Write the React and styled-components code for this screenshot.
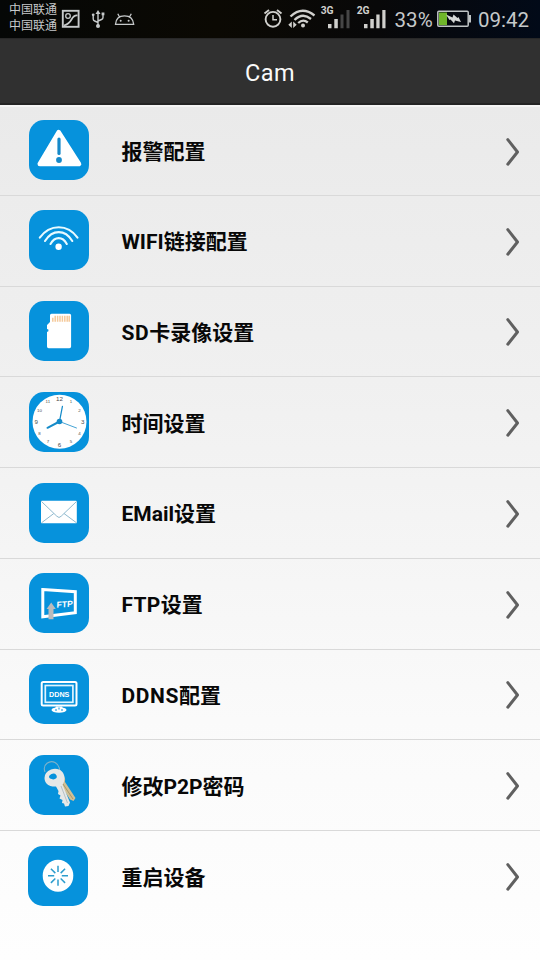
import React from "react";
import styled, { createGlobalStyle } from "styled-components";

const GlobalStyle = createGlobalStyle`
  * { box-sizing: border-box; }
  body { margin: 0; font-family: Roboto, "Noto Sans CJK SC", sans-serif; }
  svg { display: block; flex: none; }
`;

const Screen = styled.div`
  display: flex;
  flex-direction: column;
  width: 540px;
  height: 960px;
  overflow: hidden;
  background: linear-gradient(#eaeaea 105px, #f0f0f0 380px, #fafafa 720px, #fefefe 960px);
`;

const StatusBar = styled.header`
  display: flex;
  justify-content: space-between;
  height: 38px;
  flex: none;
  padding: 0 9px;
  color: #c6c9ca;
  background: linear-gradient(90deg, #050706 0%, #0b0903 40%, #080809 70%, #020a18 100%);
`;

const StatusGroup = styled.div`
  display: flex;
  align-items: center;
`;

const Carriers = styled.div`
  font-size: 12px;
  line-height: 16.5px;
  height: 33px;
  margin: 0 4px 2px 0;
  white-space: nowrap;
`;

const StatusText = styled.span`
  font-size: 20.5px;
  line-height: 38px;
  width: ${(p) => p.$width}px;
  margin-top: 2px;
  white-space: nowrap;
`;

const TitleBar = styled.div`
  display: flex;
  align-items: center;
  justify-content: center;
  height: 67px;
  flex: none;
  padding-top: 3px;
  color: #fafafa;
  font-size: 23.5px;
  letter-spacing: 0.4px;
  background: #303030;
  border-top: 1px solid #282828;
  border-bottom: 2px solid #242424;
`;

const List = styled.ul`
  list-style: none;
  margin: 0;
  padding: 0;
  border-top: 2px solid #f5f5f5;
`;

const Row = styled.li`
  display: flex;
  align-items: center;
  height: ${(p) => (p.$first ? 88.8 : 90.75)}px;
  padding: 0 20px 0 ${(p) => p.$inset || 28.8}px;
  border-bottom: ${(p) => (p.$last ? "0" : "1px solid #d9d9d9")};
`;

const Tile = styled.div`
  width: 60px;
  height: 60px;
  flex: none;
  margin-top: ${(p) => (p.$first ? -2.5 : -0.5)}px;
  border-radius: 15px;
  background: #0692dc;
  overflow: hidden;
`;

const Label = styled.span`
  flex: 1;
  margin-left: ${(p) => p.$gap || 32.7}px;
  color: #080808;
  font-size: 21px;
  font-weight: 700;
  line-height: 30px;
  padding-top: ${(p) => (p.$first ? 2 : 3)}px;
`;

const Latin = styled.span`
  letter-spacing: ${(p) => p.$tracking}px;
`;

const Art = ({ children }) => (
  <svg width="60" height="60" viewBox="0 0 60 60" fill="none">{children}</svg>
);

const AlarmArt = () => (
  <Art>
    <path d="M29.7 12.2 L50 44 H10.8 Z" fill="#fff" stroke="#fff" strokeWidth="4.6" strokeLinejoin="round" />
    <path d="M30 19v14.5" stroke="#1689c9" strokeWidth="3.2" strokeLinecap="round" />
    <circle cx="30" cy="40" r="2.9" fill="#1689c9" />
  </Art>
);

const WifiArt = () => (
  <Art>
    <g stroke="#e8faff" strokeWidth="2.1" strokeLinecap="round">
      <path d="M10.8 27.6C21 13.8 38.5 13.8 48.5 27.6" />
      <path d="M16 31C23.5 19.2 36 19.2 43.3 31" />
      <path d="M21.5 34C26 26.2 33.5 26.2 37.8 34" />
    </g>
    <circle cx="29.6" cy="36.8" r="3.2" fill="#fff" />
  </Art>
);

const SdArt = () => (
  <Art>
    <path d="M22.5 12.7h18q1.6 0 1.6 1.6V45.6q0 1.7-1.7 1.7H19.7q-1.7 0-1.7-1.7V31l1.4-.8v-1.600L18 28v-4l3-3v-6.800q0-1.500 1.500-1.500Z" fill="#fff" />
    <path d="M23.800 20.800v-4M26.200 20.800v-6M28.600 20.800v-6M31 20.800v-6M33.400 20.800v-6M35.800 20.800v-6M38.200 20.800v-6M40.200 20.800v-6" stroke="#f4c99a" strokeWidth="1.500" />
  </Art>
);

const CLOCK_MARKS = [12, 1, 2, 3, 4, 5, 6, 7, 8, 9, 10, 11];

const ClockArt = () => (
  <Art>
    <circle cx="30.500" cy="29.700" r="27" fill="#fff" />
    <g fill="#4c4c4c" fontFamily="Liberation Sans" textAnchor="middle">
      {CLOCK_MARKS.map((n, i) => {
        const a = (i * Math.PI) / 6;
        const major = n % 3 === 0;
        return (
          <text key={n} x={30.5 + Math.sin(a) * 23.2} y={29.7 - Math.cos(a) * 23.2 + (major ? 2.1 : 1.6)} fontSize={major ? 6.2 : 4.4}>
            {n}
          </text>
        );
      })}
    </g>
    <g stroke="#158bc9" strokeLinecap="round">
      <path d="M30.500 29.500 18.500 35.800" strokeWidth="2" />
      <path d="M30.500 29.500 33.400 14.500" strokeWidth="1.300" />
      <path d="M30.500 29.500 47.500 36" strokeWidth=".8" />
    </g>
    <circle cx="30.500" cy="29.500" r="2.800" fill="#158bc9" />
  </Art>
);

const MailArt = () => (
  <Art>
    <rect x="12" y="17.700" width="35.800" height="22.600" rx="1" fill="#fff" />
    <path d="M12.500 18.500 27.800 33.200Q30 35.800 32.200 33.200L47.500 18.500M12.500 39.800 24.800 30.500M47.500 39.800 35 30.500" stroke="#8fb9ce" strokeWidth="1" />
  </Art>
);

const FtpArt = () => (
  <Art>
    <path d="M13.800 16.600 46.300 18.700V39.700L13.800 43.700Z" stroke="#fff" strokeWidth="3" />
    <text x="35.600" y="34.300" fill="#fff" fontFamily="Liberation Sans" fontWeight="700" fontSize="8.600" textAnchor="middle" transform="rotate(-4 35 31) skewX(-6) translate(3.300 0)">FTP</text>
    <path d="M22.200 29.500 26.800 36H24.500V46.200H19.500V36H17.600Z" fill="#b9bbbd" />
  </Art>
);

const DdnsArt = () => (
  <Art>
    <rect x="12.700" y="18" width="34.800" height="23.600" rx="1.500" stroke="#fff" strokeWidth="2" />
    <rect x="16.300" y="21.500" width="27.600" height="16.800" stroke="#dff4ff" strokeWidth="1.700" />
    <path d="M27 42.500h6l1 2h-8Z" fill="#fff" />
    <ellipse cx="30" cy="46" rx="7.500" ry="2.700" fill="#fff" />
    <path d="M26 46h2M32 46h2M30 43.500v2" stroke="#0692dc" strokeWidth="1" />
    <text x="30.200" y="32.500" fill="#fff" fontFamily="Liberation Sans" fontWeight="700" fontSize="7.200" textAnchor="middle">DDNS</text>
  </Art>
);

const KeyArt = () => (
  <Art>
    <path d="M16 17C13 9 21 5 26 7.500C31 10 31 16 30 18" stroke="#7eb1c9" strokeWidth="1.100" />
    <path d="M30 17Q37 20 36 27L46.500 43 44.500 46 41 44.500 31 29Z" fill="#cfc097" />
    <path d="M34 29 44 44" stroke="#a99769" strokeWidth="1" />
    <path fillRule="evenodd" d="M22 14.500C30 12 35.500 17 35.500 23Q35.500 27 33.500 29.500L41 47.500 39.500 51 36 51.500 35 48.500 33 48 33.500 45 30.500 43.500 31.500 40.500 29 39 29.500 36 27 31.500C20 32 15.500 28.500 15.500 23Q15.500 17 22 14.500ZM20.500 20.500Q19 22 21 23.600Q25 25.500 27.500 23Q28.500 20.500 26 18.800Q23 18 20.500 20.500Z" fill="#e6e8e7" />
    <path d="M32 31 38.500 48" stroke="#b6c1c5" strokeWidth="1" />
  </Art>
);

const RestartArt = () => (
  <Art>
    <ellipse cx="30" cy="29.800" rx="15.300" ry="16" fill="#fff" />
    <g stroke="#2c9dce" strokeWidth="1.500">
      {[0, 45, 90, 135, 180, 225, 270, 315].map((a) => (
        <path key={a} d="M30 19.800v6.200" transform={`rotate(${a} 30 29.800)`} />
      ))}
    </g>
  </Art>
);

const Chevron = () => (
  <svg width="15" height="30" viewBox="0 -1 15 30" fill="none">
    <path d="M2.800 2.600 12.500 15 2.800 27.200" stroke="#606060" strokeWidth="3" strokeLinecap="round" strokeLinejoin="round" />
  </svg>
);

const NotificationIcons = () => (
  <svg width="76" height="38" viewBox="61 0 76 38" fill="none" stroke="#c6c9ca">
    <rect x="62.800" y="10.800" width="15.800" height="16" strokeWidth="1.900" />
    <circle cx="68" cy="16" r="2.300" strokeWidth="1.300" />
    <path d="M64 25.500Q69 24 71.500 19.500T77.500 15.500" strokeWidth="1.700" />
    <path d="M98 13v13M93.200 15.500V19q0 1.500 1.500 2l3.300 1.500M103 15v2.500q0 1.500-1.500 2L98 21" strokeWidth="1.400" />
    <path d="M98 10l-2.500 4h5Z" fill="#c6c9ca" stroke="none" />
    <circle cx="98" cy="26" r="2" fill="#c6c9ca" stroke="none" />
    <circle cx="93.200" cy="14.800" r="1.400" fill="#c6c9ca" stroke="none" />
    <rect x="101.600" y="12.500" width="2.800" height="2.800" fill="#c6c9ca" stroke="none" />
    <path d="M115.500 24.400Q116 15.800 124.500 15.800T133.700 24.400ZM119.500 17 117.800 13.800M129.500 17 131.300 13.800" strokeWidth="1.300" />
    <circle cx="120.700" cy="20.800" r="1" fill="#c6c9ca" stroke="none" />
    <circle cx="128.600" cy="20.800" r="1" fill="#c6c9ca" stroke="none" />
  </svg>
);

const SignalIcons = () => (
  <svg width="130" height="38" viewBox="263 0 130 38" fill="none" stroke="#d0d0cd">
    <circle cx="273" cy="19.300" r="7.400" strokeWidth="1.900" />
    <path d="M273 15v4.700h4" strokeWidth="1.500" />
    <path d="M264.500 13.500 269 10M281.500 13.500 277 10" strokeWidth="1.900" />
    <path d="M290.500 16.500Q302 5.500 314.500 15.500M294.500 20Q302.500 12 311 19M298.200 23Q303 18.500 307.800 22.500" strokeWidth="2.300" />
    <circle cx="303" cy="25.500" r="2" fill="#d0d0cd" stroke="none" />
    <path d="M291.800 21.500v6.500l-3.500-3.200ZM293.200 21.500v6.500l3.500-3.200Z" fill="#d0d0cd" stroke="none" />
    <g fill="#d0d0cd" stroke="none">
      <path d="M328 24h3.500v4.300H328ZM334.300 19h3.500v9.300h-3.500ZM364 24h3.500v4.300H364ZM370.300 19h3.500v9.300h-3.500ZM376.300 14.500h3.300v13.800h-3.300ZM382.300 10h3.200v18.300h-3.200Z" />
      <path d="M340.500 14.500h3v13.800h-3ZM346.500 10h3v18.300h-3Z" fill="#464646" />
      <text x="320.700" y="14.200" fontFamily="Roboto" fontWeight="700" fontSize="10.300">3G</text>
      <text x="356.700" y="14.200" fontFamily="Roboto" fontWeight="700" fontSize="10.300">2G</text>
    </g>
  </svg>
);

const Battery = () => (
  <svg width="43" height="38" viewBox="435 0 43 38" fill="none">
    <rect x="437.800" y="11.300" width="30.400" height="15" rx="1" stroke="#bfc4c5" strokeWidth="1.500" />
    <rect x="439" y="12.500" width="8" height="12.600" fill="#6fb62a" />
    <path d="M469 15h2v7.500h-2" fill="#bfc4c5" />
    <path d="M446 14.500 452.500 17.500 453.500 14.500 457.500 18 458.500 17 461 22 455 20.500 454 23.200 450.500 19.500 449.500 20Z" fill="#d5d8d7" />
  </svg>
);

const BatteryLevel = styled(StatusText)`
  padding-left: 1.5px;
  letter-spacing: 0.1px;
`;

const ITEMS = [
  { label: "报警配置", Icon: AlarmArt },
  { latin: "WIFI", label: "链接配置", Icon: WifiArt },
  { latin: "SD", tracking: 0.6, label: "卡录像设置", Icon: SdArt },
  { label: "时间设置", Icon: ClockArt },
  { latin: "EMail", label: "设置", Icon: MailArt },
  { latin: "FTP", tracking: 0.3, label: "设置", Icon: FtpArt },
  { latin: "DDNS", tracking: 0.6, label: "配置", Icon: DdnsArt },
  { label: "修改P2P密码", Icon: KeyArt },
  { label: "重启设备", Icon: RestartArt, inset: 28, gap: 33.5 },
];

export default function App() {
  return (
    <Screen>
      <GlobalStyle />
      <StatusBar>
        <StatusGroup>
          <Carriers>
            <div>中国联通</div>
            <div>中国联通</div>
          </Carriers>
          <NotificationIcons />
        </StatusGroup>
        <StatusGroup>
          <SignalIcons />
          <BatteryLevel $width={42}>33%</BatteryLevel>
          <Battery />
          <StatusText $width={53}>09:42</StatusText>
        </StatusGroup>
      </StatusBar>
      <TitleBar>Cam</TitleBar>
      <List>
        {ITEMS.map(({ latin, tracking = 0, label, Icon, inset, gap }, i) => (
          <Row key={i} $first={i === 0} $last={i === ITEMS.length - 1} $inset={inset}>
            <Tile $first={i === 0}>
              <Icon />
            </Tile>
            <Label $first={i === 0} $gap={gap}>
              {latin && <Latin $tracking={tracking}>{latin}</Latin>}
              {label}
            </Label>
            <Chevron />
          </Row>
        ))}
      </List>
    </Screen>
  );
}
